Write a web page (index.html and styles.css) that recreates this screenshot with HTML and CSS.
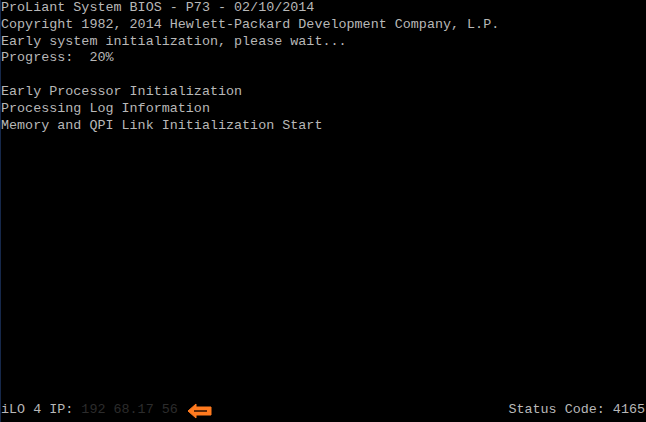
FILE: index.html
```html
<!DOCTYPE html>
<html>
<head>
<meta charset="utf-8">
<link rel="stylesheet" href="styles.css">
</head>
<body>
<div class="screen">
  <pre class="console">ProLiant System BIOS - P73 - 02/10/2014
Copyright 1982, 2014 Hewlett-Packard Development Company, L.P.
Early system initialization, please wait...
Progress:  20%

Early Processor Initialization
Processing Log Information
Memory and QPI Link Initialization Start</pre>
  <div class="footer">
    <div class="ilo">
      <span>iLO 4 IP: </span><span class="masked">192 68.17 56</span>
      <svg class="arrow" width="26" height="16" viewBox="0 0 26 16">
        <path d="M1 8 L9 1 L9 4 L24 4 L24 12 L9 12 L9 15 Z" fill="#ff7a1f" stroke="#ff7a1f" stroke-width="1" stroke-linejoin="round"/>
        <path d="M7 8 L20 8" stroke="#1a0800" stroke-width="1.4"/>
      </svg>
    </div>
    <span class="status">Status Code: 4165</span>
  </div>
</div>
</body>
</html>
```
FILE: styles.css
```css
html, body {
  margin: 0;
  padding: 0;
  background: #000;
}
.screen {
  box-sizing: border-box;
  height: 422px;
  width: 646px;
  border-left: 1px solid #16284a;
  display: flex;
  flex-direction: column;
  justify-content: space-between;
  font-family: "Liberation Mono", "DejaVu Sans Mono", monospace;
  font-size: 13.4px;
  line-height: 16.8px;
  color: #b8b8b8;
}
.console {
  margin: 0;
  padding: 0;
  font: inherit;
  white-space: pre;
}
.footer {
  display: flex;
  justify-content: space-between;
  align-items: center;
  padding-bottom: 3px;
}
.ilo {
  display: flex;
  align-items: center;
  white-space: pre;
}
.masked {
  color: #2c2c2c;
}
.arrow {
  margin-left: 9px;
  display: block;
}
.status {
  white-space: pre;
  padding-right: 1px;
}
```
